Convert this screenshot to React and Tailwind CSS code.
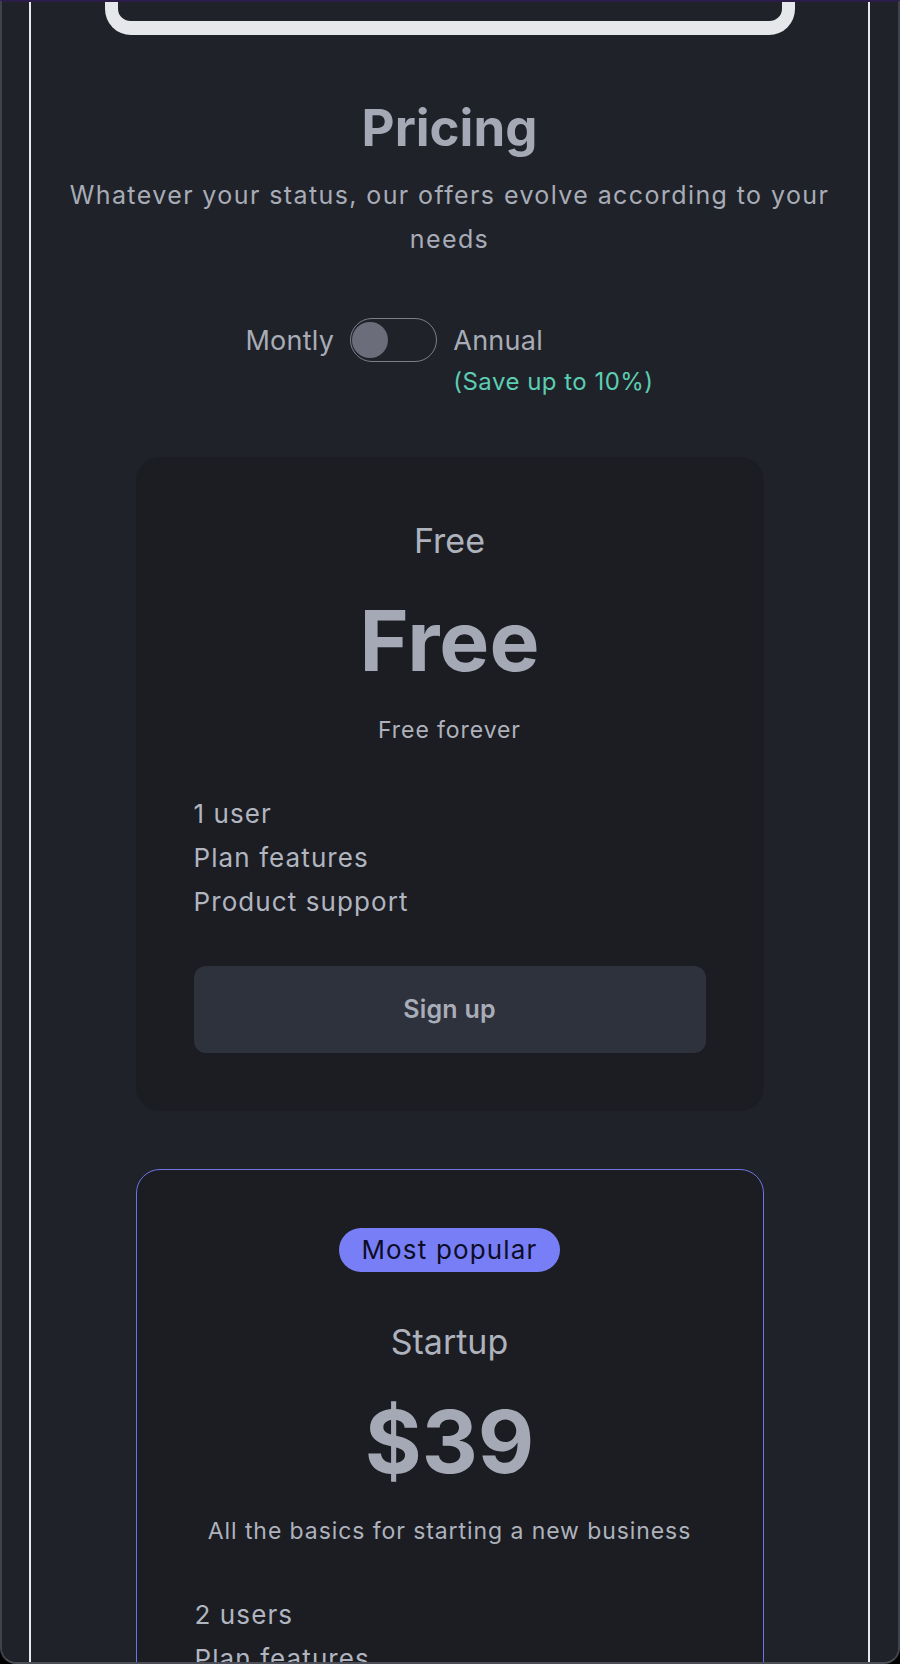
import React, { useState } from 'react'

const PLANS = [
  {
    name: 'Free',
    price: 'Free',
    priceSize: 'text-[84px]',
    description: 'Free forever',
    features: ['1 user', 'Plan features', 'Product support'],
    popular: false,
  },
  {
    name: 'Startup',
    price: '$39',
    priceSize: 'text-[87px]',
    description: 'All the basics for starting a new business',
    features: ['2 users', 'Plan features', 'Product support', 'Unlimited projects'],
    popular: true,
  },
]

function Toggle({ on, onChange }) {
  return (
    <button
      onClick={() => onChange(!on)}
      className="flex h-[44px] w-[87px] items-center rounded-full border border-[#7d808a] px-[1px]"
    >
      <span
        className={`block h-[36px] w-[36px] rounded-full bg-[#6b6e7a] ${on ? 'ml-auto' : ''}`}
      />
    </button>
  )
}

function PlanCard({ plan }) {
  return (
    <div
      className={`w-[628px] rounded-[24px] bg-[#1b1d22] px-[58px] pb-[58px] ${
        plan.popular ? 'border border-[#6f74e6] pt-[58px]' : 'pt-[58px]'
      }`}
    >
      {plan.popular && (
        <div className="mb-[44px] flex justify-center">
          <span className="h-[44px] rounded-full bg-[#787ff6] px-[22px] text-[26px] leading-[44px] tracking-[0.045em] text-[#0d0d26]">
            Most popular
          </span>
        </div>
      )}
      <h3 className="text-center text-[34px] leading-[52px] text-[#aeb2bd]">{plan.name}</h3>
      <div className={`mt-[32px] text-center ${plan.priceSize} font-bold leading-[84px] text-[#a5a9b6]`}>
        {plan.price}
      </div>
      <p className="mt-[31px] text-center text-[23px] leading-[32px] tracking-[0.04em] text-[#aeb2bd]">
        {plan.description}
      </p>
      <ul className="mt-[46px]">
        {plan.features.map(f => (
          <li key={f} className="text-[26px] leading-[44px] tracking-[0.042em] text-[#b1b5c0]">{f}</li>
        ))}
      </ul>
      <button className="mt-[42px] h-[87px] w-full rounded-[12px] bg-[#2e323d] text-[25px] font-semibold tracking-[0.01em] text-[#a9adb8]">
        Sign up
      </button>
    </div>
  )
}

export default function App() {
  const [annual, setAnnual] = useState(false)

  return (
    <div className="h-[1664px] w-[900px] bg-black font-['Inter',sans-serif]">
      <div className="h-[1664px] overflow-hidden rounded-b-[16px] border-x-2 border-b-2 border-t-2 border-x-[#3f424b] border-b-[#4b4e57] border-t-[#2b1c4a] bg-[#1f2229]">
        <div className="mx-[27px] mr-[28px] flex h-full flex-col items-center border-x-2 border-[#e8e9ee]">
          {/* bottom edge of the mockup above */}
          <div className="-mt-[2px] h-[35px] w-[690px] shrink-0 rounded-b-[26px] border-x-[13px] border-b-[14px] border-[#e5e7eb]" />

          <h2 className="mt-[63px] text-[51px] font-bold leading-[60px] text-[#a5a9b6]">Pricing</h2>
          <p className="mt-[15px] w-[800px] text-center text-[25px] leading-[44px] tracking-[0.056em] text-[#a8acb7]">
            Whatever your status, our offers evolve according to your needs
          </p>

          <div className="mt-[57px] flex items-start gap-4">
            <span className="text-[27px] leading-[46px] tracking-[0.01em] text-[#a8acb7]">Montly</span>
            <Toggle on={annual} onChange={setAnnual} />
            <div className="flex flex-col">
              <span className="text-[27px] leading-[46px] tracking-[0.01em] text-[#a8acb7]">Annual</span>
              <span className="mt-[2px] text-[24px] leading-[32px] tracking-[0.02em] text-[#5ccdb2]">(Save up to 10%)</span>
            </div>
          </div>

          <div className="mt-[59px] flex flex-col gap-[58px]">
            {PLANS.map(plan => (
              <PlanCard key={plan.name} plan={plan} />
            ))}
          </div>
        </div>
      </div>
    </div>
  )
}
